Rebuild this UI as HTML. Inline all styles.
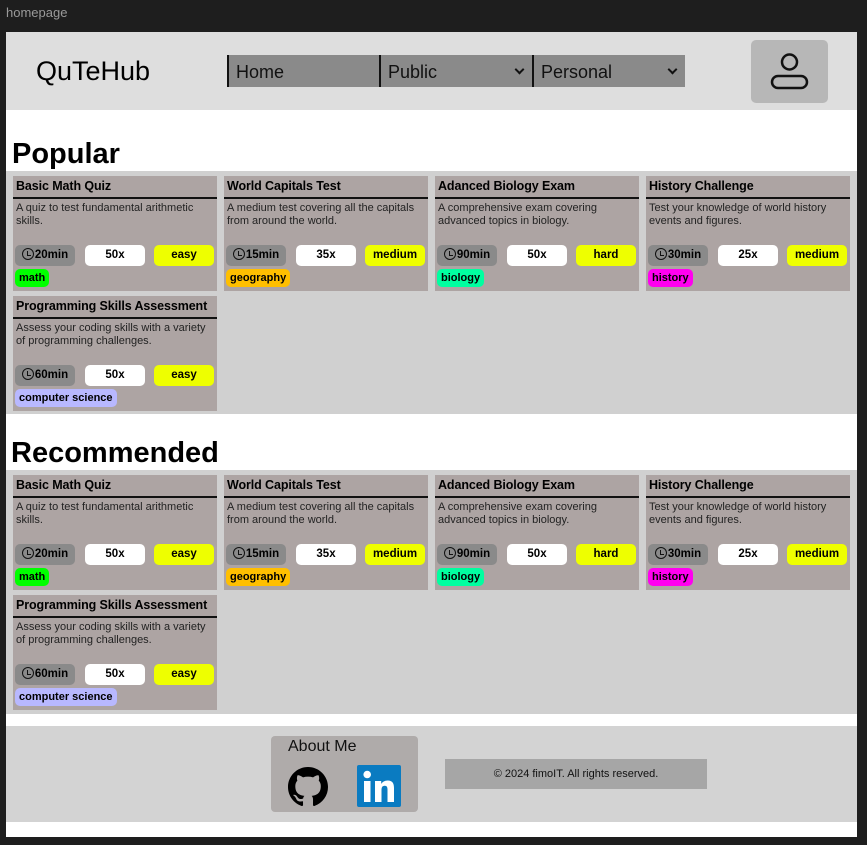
<!DOCTYPE html>
<html><head><meta charset="utf-8"><style>
*{margin:0;padding:0;box-sizing:border-box}
body{width:867px;height:845px;background:#1e1e1e;font-family:"Liberation Sans",sans-serif;position:relative;overflow:hidden}
.a{position:absolute}
.tb{left:6px;top:5px;color:#9a9a9a;font-size:13px}
.frame{left:6px;top:32px;width:851px;height:805px;background:#fff}
.hdr{left:6px;top:32px;width:851px;height:78px;background:#dedede}
.logo{left:36px;top:56px;font-size:27px;color:#000}
.nav{top:55px;height:32px;background:#8a8a8a;border-left:2px solid #111;font-size:18px;line-height:34px;padding-left:7px;color:#111}
.chev{position:absolute;right:9px;top:11px;width:7px;height:7px;border-right:2px solid #111;border-bottom:2px solid #111;transform:rotate(45deg)}
.user{left:751px;top:40px;width:77px;height:63px;background:#b7b7b7;border-radius:5px}
h2{position:absolute;font-size:29px;font-weight:bold;color:#000}
.sec{left:6px;width:851px;background:#d0d0d0}
.card{position:absolute;width:204px;height:115px;background:#ada4a3}
.t{position:absolute;left:3px;top:3px;font-size:12.5px;font-weight:bold;color:#000;white-space:nowrap;letter-spacing:-0.1px}
.ln{position:absolute;left:0;top:21px;width:204px;height:2px;background:#111}
.d{position:absolute;left:3px;top:26px;width:200px;font-size:11px;line-height:13px;color:#222}
.p{position:absolute;top:69px;height:21px;border-radius:5px;font-size:11.5px;font-weight:bold;text-align:center;line-height:21px;color:#000}
.tm{left:2px;width:60px;background:#8a8a8a}
.ct{left:72px;width:60px;background:#fff}
.df{left:141px;width:60px;background:#eeff00}
.tag{position:absolute;left:2px;top:93px;height:18px;border-radius:5px;font-size:11px;font-weight:bold;line-height:18px;padding:0 4px;color:#000}
.clk{display:inline-block;width:12px;height:12px;border:1.3px solid #111;border-radius:50%;vertical-align:-2px;margin-right:1px;position:relative}
.clk:after{content:"";position:absolute;left:4px;top:1.5px;width:3px;height:4px;border-left:1.2px solid #111;border-bottom:1.2px solid #111}
.foot{left:6px;top:726px;width:851px;height:96px;background:#d3d3d3}
.about{left:271px;top:736px;width:147px;height:76px;background:#afabaa;border-radius:4px}
.copy{left:445px;top:759px;width:262px;height:30px;background:#a6a6a6;font-size:11px;text-align:center;line-height:30px;color:#111}
</style></head><body>
<div class="a tb">homepage</div>
<div class="a frame"></div>
<div class="a hdr"></div>
<div class="a logo">QuTeHub</div>
<div class="a nav" style="left:227px;width:152px">Home</div>
<div class="a nav" style="left:379px;width:153px">Public<span class="chev"></span></div>
<div class="a nav" style="left:532px;width:153px">Personal<span class="chev"></span></div>
<div class="a user"><svg width="77" height="63" viewBox="0 0 77 63"><circle cx="38.5" cy="22" r="7.5" fill="none" stroke="#111" stroke-width="2.5"/><rect x="21" y="36" width="35" height="12" rx="6" fill="none" stroke="#111" stroke-width="2.5"/></svg></div>

<h2 style="left:12px;top:138px">Popular</h2>
<div class="a sec" style="top:171px;height:243px"></div>
<h2 style="left:11px;top:437px">Recommended</h2>
<div class="a sec" style="top:470px;height:244px"></div>

<div id="c"></div>

<div class="a foot"></div>
<div class="a about">
<div class="a" style="left:17px;top:2px;font-size:16px;color:#111">About Me</div>
<svg class="a" style="left:17px;top:31px" width="40" height="40" viewBox="0 0 16 16"><path fill="#000" d="M8 0C3.58 0 0 3.580 0 8c0 3.54 2.29 6.53 5.47 7.59.4.07.55-.17.55-.38 0-.19-.01-.82-.01-1.49-2.010.37-2.53-.49-2.69-.94-.09-.23-.48-.94-.82-1.13-.28-.15-.68-.52-.01-.53.63-.01 1.08.58 1.230.82.72 1.21 1.87.87 2.33.66.07-.52.28-.87.51-1.07-1.78-.2-3.64-.89-3.64-3.95 0-.87.31-1.59.82-2.15-.08-.2-.36-1.02.08-2.12 0 0 .67-.21 2.2.82.64-.18 1.32-.27 2-.27.68 0 1.36.09 2 .27 1.53-1.04 2.2-.82 2.2-.82.44 1.1.16 1.92.08 2.12.51.56.82 1.27.82 2.15 0 3.07-1.87 3.75-3.65 3.95.29.25.54.73.54 1.48 0 1.07-.01 1.93-.01 2.2 0 .21.15.46.55.38A8.013 8.013 0 0016 8c0-4.42-3.58-8-8-8z"/></svg>
<svg class="a" style="left:86px;top:29px" width="44" height="42" viewBox="0 0 44 42"><rect width="44" height="42" rx="2" fill="#0a7bc1"/><rect x="7" y="16" width="6.5" height="21" fill="#fff"/><circle cx="10.2" cy="9.5" r="3.8" fill="#fff"/><path d="M18 16h6.2v3c1.2-2 3.4-3.5 6.5-3.5 5 0 6.3 3.2 6.3 7.5V37h-6.5V24.5c0-2.3-.6-3.800-2.8-3.8-2.4 0-3.2 1.8-3.2 4V37H18z" fill="#fff"/></svg>
</div>
<div class="a copy">© 2024 fimoIT. All rights reserved.</div>

<script>
var Q=[["Basic Math Quiz","A quiz to test fundamental arithmetic skills.","20min","50x","easy","math","#00ff00"],
["World Capitals Test","A medium test covering all the capitals from around the world.","15min","35x","medium","geography","#ffbf00"],
["Adanced Biology Exam","A comprehensive exam covering advanced topics in biology.","90min","50x","hard","biology","#00ffa0"],
["History Challenge","Test your knowledge of world history events and figures.","30min","25x","medium","history","#ff00f0"],
["Programming Skills Assessment","Assess your coding skills with a variety of programming challenges.","60min","50x","easy","computer science","#b8b8ff"]];
var X=[13,224,435,646],h="";
[176,475].forEach(function(Y){Q.forEach(function(q,i){var x=X[i%4],y=Y+(i>3?120:0);
h+='<div class="card" style="left:'+x+'px;top:'+y+'px"><div class="t">'+q[0]+'</div><div class="ln"></div><div class="d">'+q[1]+'</div><div class="p tm"><span class="clk"></span>'+q[2]+'</div><div class="p ct">'+q[3]+'</div><div class="p df">'+q[4]+'</div><div class="tag" style="background:'+q[6]+'">'+q[5]+'</div></div>';});});
document.getElementById("c").innerHTML=h;
</script>
</body></html>
